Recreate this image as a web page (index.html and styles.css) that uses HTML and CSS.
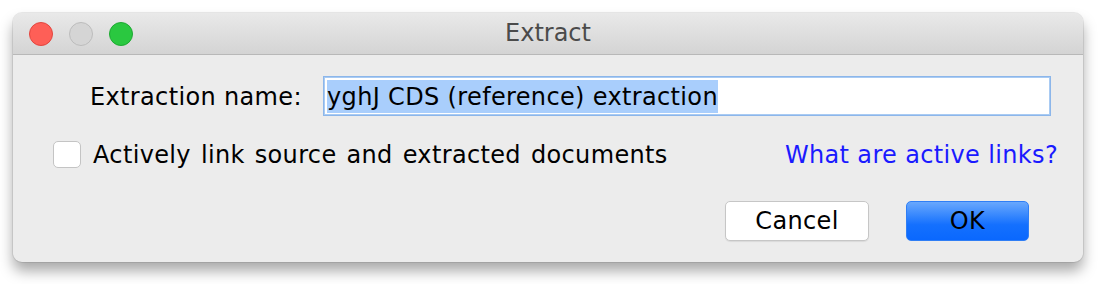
FILE: index.html
```html
<!DOCTYPE html>
<html>
<head>
<meta charset="utf-8">
<link rel="stylesheet" href="styles.css">
</head>
<body>
<div class="window">
  <div class="titlebar">
    <div class="lights">
      <span class="light red"></span>
      <span class="light gray"></span>
      <span class="light green"></span>
    </div>
    <div class="title">Extract</div>
  </div>
  <div class="content">
    <div class="row name-row">
      <span class="label">Extraction name:</span>
      <div class="field"><span class="sel">yghJ CDS (reference) extraction</span></div>
    </div>
    <div class="row check-row">
      <span class="checkbox"></span>
      <span class="check-label">Actively link source and extracted documents</span>
      <span class="link">What are active links?</span>
    </div>
    <div class="row buttons">
      <button class="btn cancel">Cancel</button>
      <button class="btn ok">OK</button>
    </div>
  </div>
</div>
</body>
</html>
```
FILE: styles.css
```css
html, body {
  margin: 0;
  padding: 0;
  background: #ffffff;
}
body {
  width: 1104px;
  height: 284px;
  overflow: hidden;
  font-family: "DejaVu Sans", sans-serif;
  letter-spacing: 0.35px;
}
.window {
  margin: 13px 0 0 13px;
  width: 1070px;
  height: 249px;
  background: #ececec;
  border-radius: 9px;
  box-shadow: 0 0 0 1px rgba(0,0,0,0.08), 0 9px 14px rgba(0,0,0,0.34);
  overflow: hidden;
  display: flex;
  flex-direction: column;
}
.titlebar {
  height: 41px;
  flex: none;
  background: linear-gradient(#e9e9e9, #d4d4d4);
  border-bottom: 1px solid #b8b8b8;
  position: relative;
  display: flex;
  align-items: center;
}
.lights {
  display: flex;
  gap: 16px;
  padding-left: 16px;
}
.light {
  width: 24px;
  height: 24px;
  border-radius: 50%;
  box-sizing: border-box;
}
.red { background: #fe5f57; border: 1px solid #e2463f; }
.gray { background: #d5d5d5; border: 1px solid #bcbcbc; }
.green { background: #2ac840; border: 1px solid #1ea932; }
.title {
  position: absolute;
  left: 0;
  right: 0;
  top: 0;
  height: 41px;
  line-height: 41px;
  text-align: center;
  font-size: 24px;
  color: #4b4b4b;
  letter-spacing: 0;
  pointer-events: none;
}
.content {
  flex: 1;
  display: flex;
  flex-direction: column;
  padding-top: 21px;
}
.row {
  display: flex;
  align-items: center;
}
.name-row {
  padding-left: 77px;
  padding-right: 32px;
  height: 40px;
}
.label {
  font-size: 24px;
  color: #000;
  width: 233px;
  flex: none;
  padding-top: 2px;
}
.field {
  flex: 1;
  height: 40px;
  box-sizing: border-box;
  background: #fff;
  border: 1px solid #8cb6ea;
  box-shadow: inset 0 0 0 1px #a9cbf3;
  display: flex;
  align-items: center;
  padding-left: 3px;
}
.sel {
  background: #a9cefc;
  font-size: 24px;
  line-height: 32px;
  color: #000;
  padding-top: 1px;
}
.check-row {
  margin-top: 24px;
  padding-left: 40px;
  padding-right: 25px;
  height: 28px;
}
.checkbox {
  width: 28px;
  height: 27px;
  box-sizing: border-box;
  border: 1px solid #c4c4c4;
  border-radius: 5px;
  background: #fff;
  flex: none;
  margin-right: 12px;
}
.check-label {
  font-size: 24px;
  color: #000;
  flex: 1;
  word-spacing: 2px;
  padding-top: 2px;
}
.link {
  font-size: 24px;
  color: #1a1aff;
  padding-top: 2px;
}
.buttons {
  margin-top: 33px;
  justify-content: flex-end;
  padding-right: 54px;
  gap: 37px;
}
.btn {
  font-family: "DejaVu Sans", sans-serif;
  font-size: 24px;
  height: 40px;
  border-radius: 5px;
  box-sizing: border-box;
  padding: 0;
  color: #000;
  letter-spacing: 0.35px;
}
.cancel {
  width: 144px;
  background: #fff;
  border: 1px solid #c6c6c6;
  box-shadow: 0 1px 1px rgba(0,0,0,0.08);
}
.ok {
  width: 123px;
  background: linear-gradient(#69a8fd, #1470fe 60%, #0a68fe);
  border: 1px solid #2f7ef5;
}
```
